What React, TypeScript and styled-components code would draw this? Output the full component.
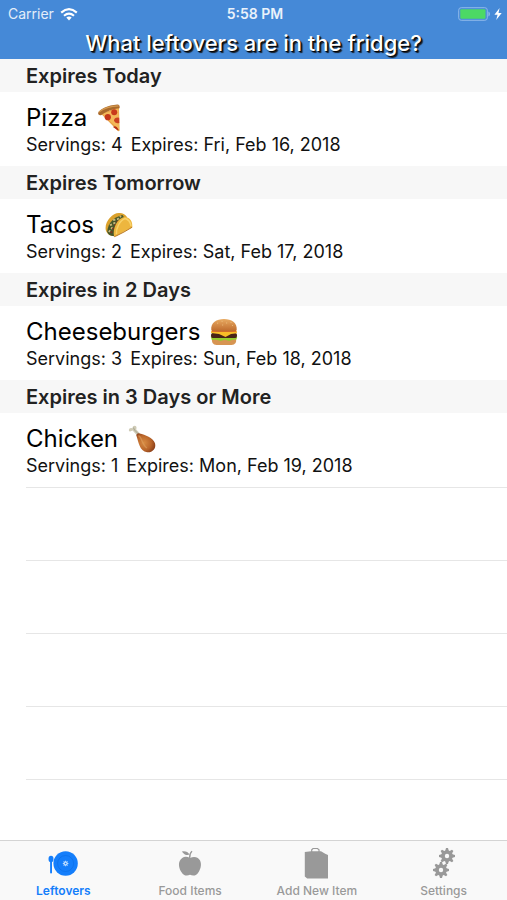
import React from "react";
import styled, { createGlobalStyle } from "styled-components";

const GlobalStyle = createGlobalStyle`
  *, *::before, *::after { box-sizing: border-box; }
  body {
    margin: 0;
    background: #fff;
    color: #000;
    font-family: Inter, "Liberation Sans", sans-serif;
  }
`;

const Page = styled.div`
  display: flex;
  flex-direction: column;
  min-height: 100vh;
`;

const TopBar = styled.header`
  background: #4589d7;
  color: #fff;
  height: 59px;
`;

const StatusBar = styled.div`
  display: grid;
  grid-template-columns: 1fr auto 1fr;
  align-items: center;
  height: 28px;
  padding: 0 5px 0 8px;
  font-size: 14px;
  line-height: 16px;
`;

const Carrier = styled.div`
  display: flex;
  align-items: center;
  gap: 6px;
  color: #e3edf9;
`;

const Clock = styled.time`
  font-weight: 600;
  color: #eaf2fb;
`;

const Power = styled.div`
  display: flex;
  align-items: center;
  justify-content: flex-end;
  gap: 4px;
`;

const PageTitle = styled.h1`
  margin: 0;
  text-align: center;
  font-size: 22px;
  line-height: 30px;
  font-weight: 500;
  text-shadow: 1px 1px 1px #000, 2px 2px 1px #1a2430;
`;

const List = styled.main`
  display: flex;
  flex: 1;
  flex-direction: column;
`;

const SectionTitle = styled.h2`
  margin: 0;
  height: 33px;
  padding: 2px 26px 0;
  background: #f7f7f7;
  color: #222;
  font-size: 20px;
  line-height: 30px;
  font-weight: 600;
`;

const Row = styled.article`
  height: 74px;
  padding: 10px 26px 0;
`;

const FoodName = styled.h3`
  display: flex;
  align-items: center;
  gap: 10px;
  margin: 0;
  font-size: 24px;
  line-height: 32px;
  font-weight: 400;
`;

const Details = styled.p`
  display: flex;
  gap: 8px;
  margin: 0;
  font-size: 18px;
  line-height: 22px;
  color: #111;
`;

const EmptyRow = styled.div`
  height: 73px;
  margin-left: 26px;
  border-top: 1px solid #e6e6e6;

  &:last-child {
    flex: 1;
    height: auto;
    min-height: 60px;
  }
`;

const TabBar = styled.nav`
  display: grid;
  grid-template-columns: repeat(4, 1fr);
  height: 60px;
  background: #f9f9f9;
  border-top: 1px solid #d4d4d4;
`;

const Tab = styled.button<{ $active?: boolean }>`
  display: flex;
  flex-direction: column;
  align-items: center;
  gap: 2px;
  padding: 6px 0 0;
  border: 0;
  background: none;
  color: ${(p) => (p.$active ? "#147efb" : "#999")};
  font-family: inherit;
  font-size: 12px;
  line-height: 16px;
  font-weight: ${(p) => (p.$active ? 600 : 500)};
  cursor: pointer;
`;

const WifiIcon = () => (
  <svg width="18" height="13" viewBox="0 0 18 13" fill="none" stroke="#fff" aria-hidden="true">
    <path d="M1.2 4.6Q9-2.2 16.8 4.6" strokeWidth="2.2" />
    <path d="M4 7.7Q9 3.4 14 7.7" strokeWidth="2.1" />
    <path d="M6.3 9.6Q9 7.5 11.7 9.6L9 12.4Z" fill="#fff" stroke="none" />
  </svg>
);

const BatteryIcon = () => (
  <svg width="32" height="14" viewBox="0 0 32 14" role="img" aria-label="Battery full">
    <rect x="0.7" y="0.7" width="28.6" height="12.6" rx="2.5" fill="none" stroke="#8fb9ea" />
    <rect x="2.3" y="2.3" width="25.2" height="9.4" rx="1" fill="#4cd964" />
    <path d="M30.4 4.6Q32 5.2 32 7T30.4 9.4Z" fill="#8fb9ea" />
  </svg>
);

const BoltIcon = () => (
  <svg width="8" height="12" viewBox="0 0 8 12" fill="#fff" role="img" aria-label="Charging">
    <path d="M5.6 0L0.4 6.8H3.6L2.2 12L7.7 4.9H4.5Z" />
  </svg>
);

const PizzaIcon = () => (
  <svg width="27" height="28" viewBox="0 0 27 28" aria-label="pizza" role="img">
    <path d="M3.6 9.2C9 8 16 5.2 22 2.5L22.6 26.5Q22 28 20.4 26.6Z" fill="#e9a347" />
    <path d="M5 9.8Q14 8 21.6 4L22 25.4Z" fill="#f3b759" />
    <path d="M1 9C3.2 4.8 10.5 1.2 20.4 0.5Q23.2 0.8 22.6 4.2C16 4.8 9 7.5 4.5 11Q1.4 12.2 1 9Z" fill="#a9692c" />
    <path d="M1.9 8Q9 2.3 21.6 1.8" stroke="#d59a50" strokeWidth="1.2" fill="none" />
    <circle cx="17.2" cy="8.3" r="3" fill="#c83a1c" />
    <circle cx="10.8" cy="13.2" r="3.1" fill="#c5371b" />
    <path d="M22.2 13.7Q17.2 13 17 16.8Q18 20 22.3 19Z" fill="#cb4022" />
    <path d="M16 23Q19 20.6 21.5 25.4L21 26.5Z" fill="#b72f18" />
  </svg>
);

const TacoIcon = () => (
  <svg width="29" height="28" viewBox="0 0 29 28" aria-label="taco" role="img">
    <path d="M2 20C-0.4 12 8 2 15 2.1Q20 1.8 23 6L10 25Q4.2 25.2 2 20Z" fill="#dba12c" />
    <path d="M3.2 20.5C4 12 10 6 18.5 4L21 8L10.3 25.2Q4 25 3.2 20.5Z" fill="#46572b" />
    <path d="M4.8 21L8 17L6.7 14L10.5 12L9.8 9L14 8L17 5" stroke="#c8b67a" strokeWidth="1.8" strokeDasharray="2.2 1.6" fill="none" />
    <path d="M7 22L9 18L12 13L14 10" stroke="#79351f" strokeWidth="2" strokeDasharray="2 2" fill="none" />
    <path d="M10 25.2C8.5 18 12.8 7 21 5.8C26.2 6.5 29 11 28.2 16.2Q19 21 11.7 25.2Z" fill="#edb63e" />
    <path d="M12.4 23.2C12 17 15.8 9.4 21.2 7.5Q26 9 27 14.8" stroke="#f8d26b" strokeWidth="1.5" fill="none" />
    <path d="M10 25.2Q10.3 26 11.7 25.2Q20 21.3 28.2 16.2" stroke="#ba7922" strokeWidth="1" fill="none" />
  </svg>
);

const BurgerIcon = () => (
  <svg width="28" height="28" viewBox="0 0 28 28" aria-label="burger" role="img">
    <defs>
      <linearGradient id="bun" x1="0" y1="0" x2="0" y2="1">
        <stop offset="0" stopColor="#e8aa62" />
        <stop offset="1" stopColor="#bd692b" />
      </linearGradient>
    </defs>
    <path d="M2 20H26Q27.2 27 21.5 27H6.5Q1 27 2 20Z" fill="#d79552" />
    <path d="M0.8 18.7Q14 16.6 27.2 18.7L26.5 21.4L22.7 21.7L19.2 23L15 21.8L10.3 23L6.5 21.7L1.8 22Z" fill="#93cc2e" />
    <rect x="1" y="14.8" width="26" height="5.3" rx="2.6" fill="#4a2417" />
    <path d="M1.3 12.5H26.7L27 15.2L21 16L15.5 19L9 16.1L1 15Z" fill="#f9be27" />
    <path d="M2 12.1H26L26.2 13.7H1.8Z" fill="#dd5a2b" />
    <path d="M1.3 12C0.5 4.6 6.5 1 14 1S27.5 4.6 26.7 12Q24 14 14 13.4Q4 14 1.3 12Z" fill="url(#bun)" />
    <path d="M7 5.2H8.2M11.5 3.3H12.7M16 5H17.2M20.5 4.4H21.7M12 7H13.2M22 7.5H23" stroke="#f0c78a" strokeWidth="0.7" />
  </svg>
);

const DrumstickIcon = () => (
  <svg width="29" height="28" viewBox="0 0 29 28" aria-label="drumstick" role="img">
    <defs>
      <radialGradient id="meat" cx="0.4" cy="0.5" r="0.65">
        <stop offset="0" stopColor="#d88b42" />
        <stop offset="0.6" stopColor="#b9652a" />
        <stop offset="1" stopColor="#863b18" />
      </radialGradient>
    </defs>
    <path d="M4.6 5.6L9.6 11L12 8.6L8.2 4.6Q9.4 0.8 6.4 0.8Q4.4 0.9 4.5 3.2Q1.2 2.3 0.8 4.9Q1 7.5 4.6 5.6Z" fill="#cfcbb6" />
    <path d="M5.4 2.5L6.5 5L10.4 9" stroke="#9b9985" strokeWidth="0.8" fill="none" />
    <path d="M8.2 10Q9.3 7.8 11.7 8.5C17 10 25 12.4 27 18.2C28.5 24 24 27.7 19.2 27.2C11.3 26.2 10.7 17 8.2 10Z" fill="url(#meat)" />
    <path d="M10.5 10.7C14.2 12.4 14 20 19 23" stroke="#dda05f" strokeWidth="1.4" opacity="0.6" fill="none" />
  </svg>
);

const PlateIcon = () => (
  <svg width="30" height="34" viewBox="0 0 30 34" fill="currentColor" aria-hidden="true">
    <ellipse cx="3" cy="12" rx="2.5" ry="3.3" />
    <rect x="2.1" y="14" width="1.9" height="12.5" rx="0.9" />
    <circle cx="17.6" cy="16.5" r="12.2" />
    <circle cx="17.6" cy="16.5" r="8" fill="none" stroke="#0869df" strokeWidth="0.5" />
    <g stroke="#b9dbff" strokeWidth="1.1">
      <path d="M17.6 13.7V19.3M14.8 16.5H20.4M15.6 14.5L19.6 18.5M19.6 14.5L15.6 18.5" />
    </g>
    <circle cx="17.6" cy="16.5" r="0.8" />
  </svg>
);

const AppleIcon = () => (
  <svg width="24" height="34" viewBox="0 0 24 34" fill="currentColor" aria-hidden="true">
    <path d="M12 11C9.4 9.6 6.4 9.4 4.2 11C0 13.8 0.3 20 3 24.4C5.8 29 8.8 29.2 12 27.8C15.2 29.2 18.4 29 21 24.4C23.8 19.8 23.8 13.7 19.8 11C17.5 9.5 14.6 9.6 12 11Z" />
    <path d="M3.8 4.4Q9.2 3.4 11.6 7.6Q7.3 9.2 3.8 4.4Z" />
    <path d="M11.7 11Q11.3 6.8 14 4.1" stroke="currentColor" strokeWidth="1.3" fill="none" />
  </svg>
);

const BagIcon = () => (
  <svg width="25" height="34" viewBox="0 0 25 34" aria-hidden="true">
    <path d="M7.7 5V2.7L9 1.5H13.5L15 2.7V5" fill="none" stroke="currentColor" strokeWidth="1.2" />
    <path d="M0.8 5L7 4.3H17L21.2 6.8L24 8V31.6H3.2L0.8 29.6Z" fill="currentColor" />
  </svg>
);

const Gear = ({ x, y }: { x: number; y: number }) => (
  <g transform={`translate(${x} ${y})`}>
    {[0, 45, 90, 135].map((angle) => (
      <path key={angle} d="M-1.7 -5.5L-1 -8H1L1.7 -5.5V5.5L1 8H-1L-1.7 5.5Z" transform={`rotate(${angle})`} />
    ))}
    <circle r="5.8" />
    <circle r="2.2" fill="#f9f9f9" />
  </g>
);

const GearsIcon = () => (
  <svg width="24" height="34" viewBox="0 0 24 34" fill="currentColor" aria-hidden="true">
    <Gear x={15} y={9} />
    <Gear x={9} y={23} />
  </svg>
);

const sections = [
  { title: "Expires Today", food: "Pizza", servings: 4, expires: "Fri, Feb 16, 2018", Icon: PizzaIcon },
  { title: "Expires Tomorrow", food: "Tacos", servings: 2, expires: "Sat, Feb 17, 2018", Icon: TacoIcon },
  { title: "Expires in 2 Days", food: "Cheeseburgers", servings: 3, expires: "Sun, Feb 18, 2018", Icon: BurgerIcon },
  { title: "Expires in 3 Days or More", food: "Chicken", servings: 1, expires: "Mon, Feb 19, 2018", Icon: DrumstickIcon },
];

const emptyRows = [0, 1, 2, 3, 4];

const tabs = [
  { label: "Leftovers", Icon: PlateIcon },
  { label: "Food Items", Icon: AppleIcon },
  { label: "Add New Item", Icon: BagIcon },
  { label: "Settings", Icon: GearsIcon },
];

export default function App() {
  const [active, setActive] = React.useState("Leftovers");

  return (
    <Page>
      <GlobalStyle />
      <TopBar>
        <StatusBar>
          <Carrier>
            Carrier
            <WifiIcon />
          </Carrier>
          <Clock>5:58 PM</Clock>
          <Power>
            <BatteryIcon />
            <BoltIcon />
          </Power>
        </StatusBar>
        <PageTitle>What leftovers are in the fridge?</PageTitle>
      </TopBar>
      <List>
        {sections.map(({ title, food, servings, expires, Icon }) => (
          <section key={title}>
            <SectionTitle>{title}</SectionTitle>
            <Row>
              <FoodName>
                {food}
                <Icon />
              </FoodName>
              <Details>
                <span>Servings: {servings}</span>
                <span>Expires: {expires}</span>
              </Details>
            </Row>
          </section>
        ))}
        {emptyRows.map((n) => (
          <EmptyRow key={n} />
        ))}
      </List>
      <TabBar>
        {tabs.map(({ label, Icon }) => (
          <Tab
            key={label}
            type="button"
            $active={active === label}
            aria-current={active === label ? "page" : undefined}
            onClick={() => setActive(label)}
          >
            <Icon />
            {label}
          </Tab>
        ))}
      </TabBar>
    </Page>
  );
}
